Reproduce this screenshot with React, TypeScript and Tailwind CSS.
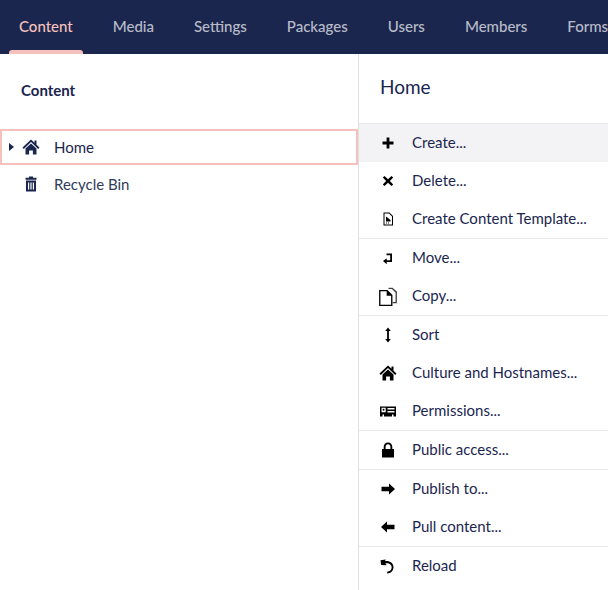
import React from "react";

const I = ({ children, w = 18, c = "" }: { children: React.ReactNode; w?: number; c?: string }) => (
  <svg width={w} height={w} viewBox="0 0 18 18" className={c} fill="currentColor">{children}</svg>
);

const Home = () => (
  <I>
    <path d="M9 1.5 0.5 9.6l1.3 1.3L9 4.1l7.2 6.8 1.3-1.3-3-2.8V2.6h-2v2.1L9 1.5Z" />
    <path d="M3.5 10.6 9 5.6l5.5 5v5.9h-3.6v-4H7.1v4H3.5v-5.9Z" />
  </I>
);

const icons: Record<string, React.ReactNode> = {
  plus: <I><path d="M7.6 3.5h2.8v4.1h4.1v2.8h-4.1v4.1H7.6v-4.1H3.5V7.6h4.1V3.5Z" /></I>,
  x: <I><path d="M5.5 3.9 9 7.2l3.5-3.3 1.7 1.7L10.9 9l3.3 3.4-1.7 1.7L9 10.8l-3.5 3.3-1.7-1.7L7.1 9 3.8 5.6l1.7-1.7Z" /></I>,
  tpl: (
    <I>
      <path fillRule="evenodd" d="M4.5 2.5h6l3.5 3.5v9.5H4.5v-13Zm1 1v11h7.500V6.500L10 3.500H5.500Z" />
      <path d="M7 6.500l4.500 3.500v1.500H7V6.500Z" />
      <path d="M7 12.500h1v1H7zM9 12.500h1v1H9z" />
    </I>
  ),
  move: <I><path d="M7.500 4.500h5.500v8.500H7.700v2.300L4 12l3.700-2.700V11.300h3.500V6.300H7.500V4.500Z" /></I>,
  copy: (
    <I w={20}>
      <path fillRule="evenodd" d="M1 3.500h7.500L13 8v10H1V3.500Zm1.200 1.200v12.100h9.600V8.800H7.800v-4.100H2.200Z" />
      <path d="M9.500 1.500h3.500l4 3.500v10.500h-3.800v-1.200h2.600V5.800l-3.300-3.100h-3V1.500Z" opacity=".75" />
    </I>
  ),
  sort: <I><path d="M9 1.500 11.800 5H9.900v8h1.900L9 16.500 6.200 13h1.900V5H6.200L9 1.500Z" /></I>,
  home: <Home />,
  perm: (
    <I>
      <path fillRule="evenodd" d="M1 4.500h16v10h-2.500v-2H13v2H5v-2H3.500v2H1v-10Zm1.500 1.300v4.500h4.200V5.800H2.500Zm6 .2v1.500h7V6h-7Zm0 3v1.500h7V9h-7Z" />
      <path d="M3.700 6.800h1.700v1.800H3.700z" />
    </I>
  ),
  lock: (
    <I>
      <path fillRule="evenodd" d="M9 1.500c2.700 0 4.300 1.800 4.300 4.500v2H15v8.500H3V8h1.700V6c0-2.700 1.600-4.500 4.300-4.500ZM6.600 8h4.800V6c0-1.700-.9-2.700-2.400-2.700S6.600 4.300 6.600 6v2Z" />
    </I>
  ),
  right: <I><path d="M10 3.500 16 9l-6 5.500v-3.300H2.500V6.800H10V3.500Z" /></I>,
  left: <I><path d="M8 3.500 2 9l6 5.500v-3.300h7.500V6.800H8V3.500Z" /></I>,
  reload: (
    <I>
      <path d="M1.500 3.200 6.800 2.500 5.900 4.300c4-.9 8.600 1.400 8.600 6 0 3.500-2.800 6.200-6.300 6.200v-1.800c2.500 0 4.500-1.900 4.500-4.400 0-3.100-3.300-4.900-6.300-3.800l1.300 1.800-5.600-.3-.6-4.800Z" />
    </I>
  ),
};

const groups: [string, string][][] = [
  [["plus", "Create..."], ["x", "Delete..."], ["tpl", "Create Content Template..."]],
  [["move", "Move..."], ["copy", "Copy..."]],
  [["sort", "Sort"], ["home", "Culture and Hostnames..."], ["perm", "Permissions..."]],
  [["lock", "Public access..."]],
  [["right", "Publish to..."], ["left", "Pull content..."]],
  [["reload", "Reload"]],
];

const tabs = ["Content", "Media", "Settings", "Packages", "Users", "Members", "Forms"];

export default function App() {
  return (
    <div className="w-[608px] h-[590px] overflow-hidden bg-white flex flex-col font-['Lato',sans-serif] text-[15px] text-[#1b264f]">
      <div className="h-[54px] shrink-0 bg-[#1b264f] flex -ml-px overflow-hidden">
        {tabs.map((t, i) => (
          <div
            key={t}
            className={`relative h-[54px] shrink-0 px-5 flex items-center font-bold-none ${i === 0 ? "text-[#f5c1bc]" : "text-white/70"}`}
          >
            <span className="whitespace-nowrap font-medium -mt-[2px]">{t}</span>
            {i === 0 && <div className="absolute left-[10px] right-[10px] bottom-0 h-1 rounded-t-[3px] bg-[#f5c1bc]" />}
          </div>
        ))}
      </div>
      <div className="flex flex-1 min-h-0">
        <div className="w-[359px] shrink-0 border-r border-[#e0e0e3]">
          <div className="h-[75px] pl-[21px] pt-[26px] font-bold text-[#1b264f] leading-[20px]">Content</div>
          <div className="h-9 border-2 border-[#f5c1bc] w-[358px] flex items-center relative">
            <div className="absolute left-[7px] top-[12px] w-0 h-0 border-y-[4px] border-y-transparent border-l-[5px] border-l-[#1b264f]" />
            <div className="ml-[19px] w-[20px] flex justify-center"><Home /></div>
            <span className="ml-[13px]">Home</span>
          </div>
          <div className="h-[38px] flex items-center pl-[21px]">
            <div className="w-[20px] flex justify-center">
              <I>
                <path d="M7 1.500h4v1.300h3.500v2h-11v-2H7V1.500Z" />
                <path fillRule="evenodd" d="M4 5.500h10v11H4v-11Zm2 2v7h1.200v-7H6Zm2.400 0v7h1.200v-7H8.400Zm2.400 0v7H12v-7h-1.200Z" />
              </I>
            </div>
            <span className="ml-[13px] text-[#303a5c]">Recycle Bin</span>
          </div>
        </div>
        <div className="flex-1 min-w-0">
          <div className="h-[69px] pl-[21px] pt-[21px] text-[19px] leading-[24px] text-[#1b264f]">Home</div>
          {groups.map((g, gi) => (
            <div key={gi} className="border-t border-[#e9e9eb]">
              {g.map(([ic, label]) => (
                <div
                  key={label}
                  className={`h-[38px] flex items-center text-[#1b264f] ${label === "Create..." ? "bg-[#f3f3f5]" : ""}`}
                >
                  <div className="w-[20px] ml-[19px] flex justify-center text-black">{icons[ic]}</div>
                  <span className="ml-[14px] whitespace-nowrap -mt-[2px]">{label}</span>
                </div>
              ))}
            </div>
          ))}
        </div>
      </div>
    </div>
  );
}
